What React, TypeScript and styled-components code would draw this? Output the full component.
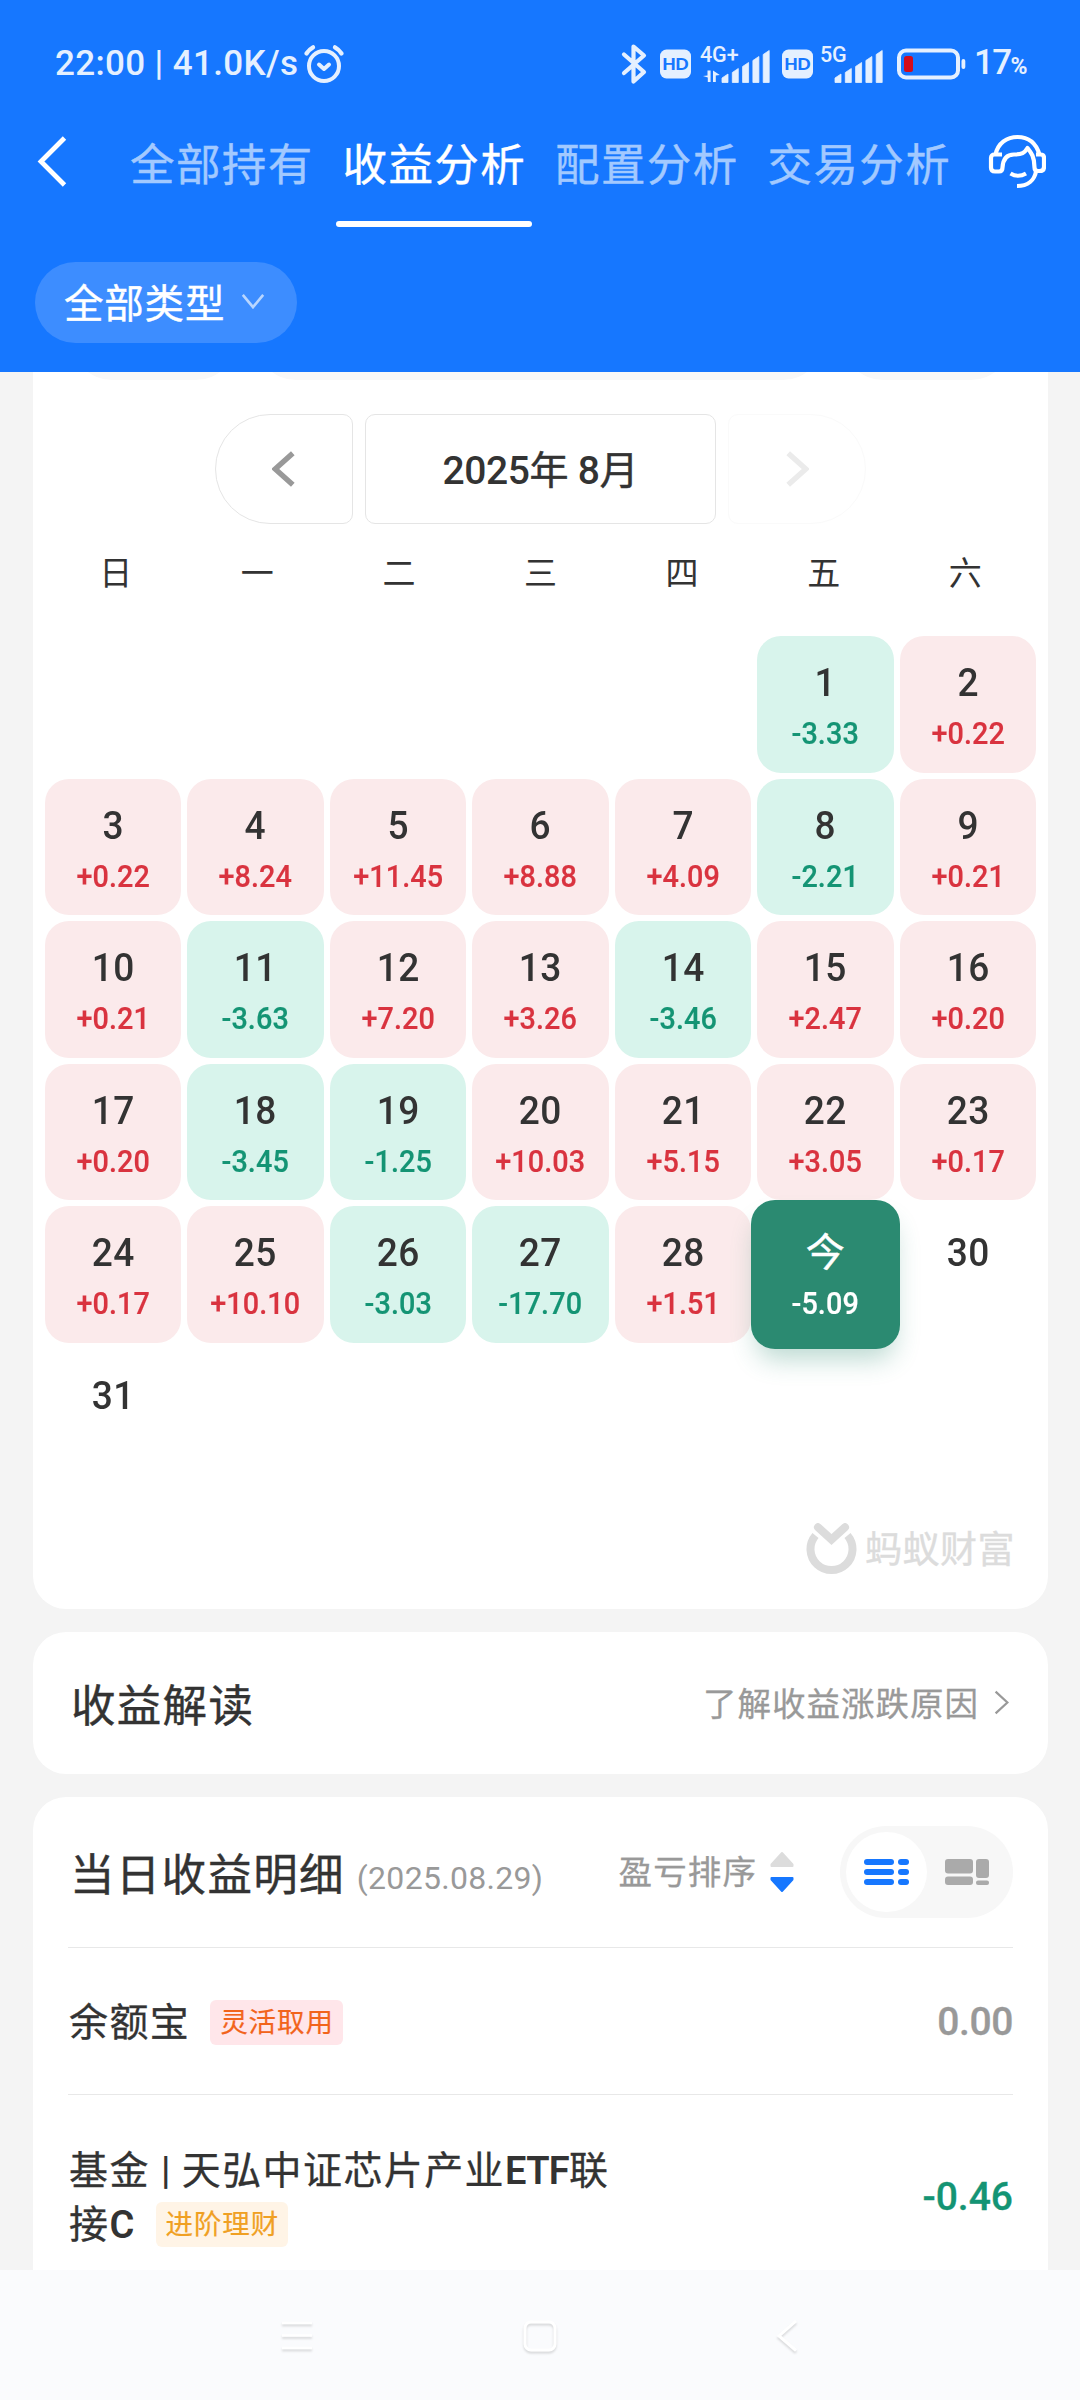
import React from "react";
import styled, { createGlobalStyle, css } from "styled-components";

const CJK = `"Noto Sans CJK SC", sans-serif`;
const NUM = `Roboto, "Noto Sans CJK SC", sans-serif`;

const GlobalStyle = createGlobalStyle`
  * { box-sizing: border-box; }
  body { margin: 0; background: #f4f4f4; }
`;

const Screen = styled.div`
  width: 1080px;
  height: 2400px;
  display: flex;
  flex-direction: column;
  overflow: hidden;
  background: #f4f4f4;
  color: #333;
  font-family: ${CJK};
`;

/* ---------- header ---------- */
const Header = styled.header`
  flex: none;
  height: 372px;
  background: #1677ff;
  color: #fff;
`;

const StatusBar = styled.div`
  height: 127px;
  padding: 0 54px 0 55px;
  display: flex;
  align-items: center;
  justify-content: space-between;
  color: #e5f0ff;
  font: 500 35px/40px ${NUM};
  white-space: pre;
`;

const StatusGroup = styled.div`
  display: flex;
  align-items: center;
`;

const Clock = styled.span`
  letter-spacing: 0.35px;
  margin-right: 5px;
`;

const Glyph = styled.svg<{ $gap?: number }>`
  display: block;
  flex: none;
  margin-left: ${(p) => p.$gap ?? 0}px;
`;

const Percent = styled.span`
  margin-left: 8px;
  padding-top: 2px;
  letter-spacing: -1.6px;
  small {
    font-size: 23px;
    font-weight: 700;
  }
`;

const NavRow = styled.nav`
  height: 100px;
  display: flex;
  padding-left: 36px;
`;

const Tabs = styled.div`
  display: flex;
  gap: 16px;
  margin-left: 55px;
`;

const Tab = styled.div<{ $active?: boolean }>`
  width: 196.5px;
  height: 100px;
  padding-left: 7px;
  font-size: 44.5px;
  line-height: 70px;
  letter-spacing: 1.4px;
  white-space: nowrap;
  -webkit-text-stroke: 0.4px currentColor;
  color: ${(p) => (p.$active ? "#fff" : "#a2c9ff")};
  &::after {
    content: "";
    display: block;
    height: 6px;
    margin: 24px 0 0 -7px;
    border-radius: 3px;
    background: ${(p) => (p.$active ? "#fff" : "transparent")};
  }
`;

const FilterPill = styled.button`
  margin: 35px 0 0 35px;
  width: 262px;
  height: 81px;
  padding: 0 0 3px 29px;
  border: 0;
  border-radius: 41px;
  background: #3d8dff;
  color: #fff;
  font: 400 39.5px/76px ${CJK};
  letter-spacing: 0.8px;
  -webkit-text-stroke: 0.4px currentColor;
  display: flex;
  align-items: center;
  gap: 16px;
`;

/* ---------- scrolling content ---------- */
const Content = styled.main`
  flex: 1;
  min-height: 0;
  overflow: hidden;
  padding: 0 32px 0 33px;
`;

const Card = styled.section`
  background: #fff;
  border-radius: 33px;
`;

const CalendarCard = styled(Card)`
  height: 1237px;
  padding: 0 12px;
  border-radius: 0 0 33px 33px;
`;

const SegmentStrip = styled.div`
  height: 8px;
  display: flex;
  align-items: flex-end;
  gap: 20px;
  padding-left: 27px;
  overflow: hidden;
`;

const SegmentEdge = styled.div<{ $w: number }>`
  flex: none;
  width: ${(p) => p.$w}px;
  height: 80px;
  border-radius: 40px;
  background: #f8f8f8;
`;

const MonthPicker = styled.div`
  margin-top: 34px;
  padding-left: 170px;
  display: flex;
  gap: 12px;
`;

const MonthBox = styled.div<{ $kind: "prev" | "label" | "next" }>`
  height: 110px;
  display: flex;
  align-items: center;
  justify-content: center;
  border: 1px solid #e5e5e5;
  border-radius: 10px;
  width: 351px;
  ${(p) =>
    p.$kind === "prev" &&
    css`
      width: 138px;
      border-radius: 55px 10px 10px 55px;
    `}
  ${(p) =>
    p.$kind === "next" &&
    css`
      width: 138px;
      border-color: #fafafa;
      border-radius: 10px 55px 55px 10px;
    `}
`;

const MonthText = styled.span`
  font: 500 39px/50px ${NUM};
  letter-spacing: -0.4px;
  white-space: pre;
  b {
    font: 400 39px/50px ${CJK};
    letter-spacing: 0;
    -webkit-text-stroke: 0.5px currentColor;
  }
`;

const WeekHeader = styled.div`
  height: 98px;
  display: grid;
  grid-template-columns: repeat(7, 1fr);
  margin-bottom: 14px;
  text-align: center;
  font-size: 33px;
  line-height: 95px;
`;

const DayGrid = styled.div`
  display: grid;
  grid-template-columns: repeat(7, 1fr);
  grid-auto-rows: 136.5px;
  gap: 6px;
`;

type Tone = "up" | "down" | "today" | "none";
const toneBg = { up: "#fbeaeb", down: "#d8f4ec", today: "#2b8a71", none: "transparent" };
const toneFg = { up: "#d9333f", down: "#149474", today: "#fff", none: "#333" };

const DayCell = styled.div<{ $tone: Tone; $col?: number }>`
  ${(p) => p.$col && `grid-column-start: ${p.$col};`}
  padding-top: 22px;
  border-radius: 24px;
  text-align: center;
  background: ${(p) => toneBg[p.$tone]};
  color: ${(p) => toneFg[p.$tone]};
  font-family: ${NUM};
  font-weight: 500;
  ${(p) =>
    p.$tone === "today" &&
    css`
      margin: -6px;
      padding-top: 28px;
      box-shadow: 0 16px 26px -6px rgba(43, 138, 113, 0.32);
    `}
`;

const DayNumber = styled.div<{ $today: boolean }>`
  height: 50px;
  font-size: 39px;
  line-height: 50px;
  letter-spacing: 0.3px;
  transform: scaleX(${(p) => (p.$today ? 1 : 0.95)});
  color: ${(p) => (p.$today ? "#fff" : "#333")};
  font-weight: ${(p) => (p.$today ? 400 : 500)};
  -webkit-text-stroke: ${(p) => (p.$today ? 0.5 : 0)}px currentColor;
`;

const DayValue = styled.div`
  font-size: 32px;
  line-height: 51px;
  letter-spacing: 0.1px;
  transform: scaleX(0.9);
  -webkit-text-stroke: 0.2px currentColor;
`;

const Watermark = styled.div`
  display: flex;
  justify-content: flex-end;
  align-items: center;
  gap: 8px;
  height: 52px;
  margin: 38px 21px 0 0;
  color: #dcdcdc;
  font-size: 37px;
  line-height: 46px;
  letter-spacing: 0.5px;
  -webkit-text-stroke: 0.4px currentColor;
  span {
    padding-bottom: 4px;
  }
`;

const InsightCard = styled(Card)`
  margin-top: 23px;
  height: 142px;
  padding: 0 39px 0 38px;
  display: flex;
  align-items: center;
  justify-content: space-between;
`;

const Title = styled.h2`
  margin: 0;
  font-size: 44.5px;
  font-weight: 400;
  line-height: 60px;
  letter-spacing: 1.3px;
  white-space: nowrap;
  -webkit-text-stroke: 0.4px currentColor;
`;

const InsightTitle = styled(Title)`
  padding-bottom: 1px;
`;

const MoreLink = styled.div`
  display: flex;
  align-items: center;
  gap: 15px;
  color: #999;
  font-size: 33.5px;
  line-height: 44px;
  letter-spacing: 1px;
  padding-bottom: 2px;
  -webkit-text-stroke: 0.3px currentColor;
`;

const DetailCard = styled(Card)`
  margin-top: 23px;
  height: 560px;
  padding: 0 35px;
`;

const DetailHead = styled.div`
  height: 151px;
  padding: 0 0 0 2px;
  display: flex;
  align-items: center;
  border-bottom: 1px solid #e8e8e8;
`;

const DateNote = styled.span`
  margin: 11px 0 0 12px;
  color: #999;
  font: 400 32px/40px ${NUM};
  letter-spacing: 0.3px;
`;

const SortButton = styled.div`
  display: flex;
  align-items: center;
  gap: 13px;
  margin-left: auto;
  color: #999;
  font-size: 33.5px;
  line-height: 44px;
  letter-spacing: 1.1px;
  -webkit-text-stroke: 0.3px currentColor;
`;

const SortLabel = styled.span`
  padding-bottom: 4px;
`;

const ViewSwitch = styled.div`
  width: 173px;
  height: 92px;
  margin-left: 46px;
  padding: 0 24px 0 6px;
  border-radius: 46px;
  background: #f7f7f7;
  display: flex;
  align-items: center;
  justify-content: space-between;
`;

const SwitchKnob = styled.div`
  width: 81px;
  height: 80px;
  border-radius: 40px;
  background: #fff;
  display: grid;
  place-items: center;
`;

const Row = styled.div<{ $h: number; $last?: boolean }>`
  height: ${(p) => p.$h}px;
  padding-left: 1px;
  display: flex;
  align-items: center;
  justify-content: space-between;
  border-bottom: ${(p) => (p.$last ? "0" : "1px solid #e8e8e8")};
`;

const FundName = styled.div`
  width: 560px;
  font-size: 39px;
  line-height: 54px;
  letter-spacing: 1.4px;
  padding-bottom: 5px;
  -webkit-text-stroke: 0.3px currentColor;
`;

const Latin = styled.b<{ $bar?: boolean }>`
  font-family: Roboto, sans-serif;
  font-weight: 600;
  font-size: 38px;
  line-height: 40px;
  letter-spacing: -0.7px;
  -webkit-text-stroke: 0;
  ${(p) => p.$bar && "font-weight: 500; margin: 0 2px 0 1px;"}
`;

const Tag = styled.i<{ $kind: "flex" | "growth" }>`
  display: inline-block;
  height: 45px;
  margin-left: ${(p) => (p.$kind === "flex" ? 20 : 22)}px;
  padding: 0 9px 0 10px;
  border-radius: 6px;
  vertical-align: 4px;
  font: 400 27.5px/41px ${CJK};
  letter-spacing: 0.9px;
  -webkit-text-stroke: 0.2px currentColor;
  color: ${(p) => (p.$kind === "flex" ? "#f2641c" : "#f0a023")};
  background: ${(p) => (p.$kind === "flex" ? "#ffe6ea" : "#fff4e6")};
`;

const Amount = styled.div<{ $down?: boolean }>`
  font: 500 39px/46px ${NUM};
  letter-spacing: ${(p) => (p.$down ? 0 : -0.4)}px;
  padding-top: ${(p) => (p.$down ? 0 : 2)}px;
  -webkit-text-stroke: 0.3px currentColor;
  color: ${(p) => (p.$down ? "#149474" : "#999")};
`;

/* ---------- system navigation ---------- */
const SystemNav = styled.footer`
  flex: none;
  height: 130px;
  background: #fafbfd;
  display: flex;
  align-items: center;
  justify-content: space-between;
  padding: 2px 276px 0 276px;
`;

const SoftGlyph = styled.svg`
  display: block;
  filter: drop-shadow(0 2px 1px rgba(0, 0, 0, 0.14));
`;

const days: [number, string][] = [
  [1, "-3.33"], [2, "+0.22"], [3, "+0.22"], [4, "+8.24"], [5, "+11.45"], [6, "+8.88"], [7, "+4.09"],
  [8, "-2.21"], [9, "+0.21"], [10, "+0.21"], [11, "-3.63"], [12, "+7.20"], [13, "+3.26"], [14, "-3.46"],
  [15, "+2.47"], [16, "+0.20"], [17, "+0.20"], [18, "-3.45"], [19, "-1.25"], [20, "+10.03"], [21, "+5.15"],
  [22, "+3.05"], [23, "+0.17"], [24, "+0.17"], [25, "+10.10"], [26, "-3.03"], [27, "-17.70"], [28, "+1.51"],
  [29, "-5.09"], [30, ""], [31, ""],
];
const TODAY = 29;

const toneOf = (day: number, value: string): Tone =>
  day === TODAY ? "today" : !value ? "none" : value[0] === "+" ? "up" : "down";

const AlarmIcon = () => (
  <Glyph width="42" height="42" viewBox="0 0 42 42" fill="none" stroke="currentColor" strokeLinecap="round" strokeLinejoin="round">
    <circle cx="21" cy="23" r="15" strokeWidth="4" />
    <path d="M16 21.500l5 4.500 5-4.500" strokeWidth="4" />
    <path d="M3.500 10.500Q6 6.500 10 4.300M38.500 10.500Q36 6.500 32 4.300" strokeWidth="4.300" />
  </Glyph>
);

const BluetoothIcon = () => (
  <Glyph width="26" height="42" viewBox="0 0 26 42" fill="none" stroke="currentColor" strokeWidth="4.200" strokeLinecap="round" strokeLinejoin="round">
    <path d="M3 11.500l20 17.500-10.500 9.500v-35L23 12.500 3 30" />
  </Glyph>
);

const HdBadge = ({ gap }: { gap: number }) => (
  <Glyph $gap={gap} width="31" height="30" viewBox="0 0 31 30">
    <rect x="0" y="0.5" width="31" height="29" rx="6.5" fill="currentColor" />
    <text x="15.2" y="21.4" textAnchor="middle" fontFamily="Lato, sans-serif" fontWeight="900" fontSize="17.5" letterSpacing="-0.5" fill="#1677ff">
      HD
    </text>
  </Glyph>
);

const SignalIcon = ({ label, gap, data }: { label: string; gap: number; data?: boolean }) => {
  const x0 = data ? 22 : 15;
  return (
    <Glyph $gap={gap} width={x0 + 49} height="40" viewBox={`0 0 ${x0 + 49} 40`} fill="currentColor">
      <text x="0" y="17.500" fontFamily="Roboto, sans-serif" fontWeight="500" fontSize="21.5" letterSpacing="-0.1">
        {label}
      </text>
      {data && <path d="M10.600 26.500v11.500h-2.800v-4.500l-4.800-1.500 4.500-0.500v-5zM13 38v-11.500l6.800 4.500-4 0.500v6.500z" />}
      {[7.5, 13, 19, 25, 31].map((h, i) => (
        <path key={h} d={`M${x0 + i * 10.3} 38.500v-${h - 3}l6-4v${h + 1}z`} stroke="currentColor" strokeWidth="0.8" strokeLinejoin="round" />
      ))}
    </Glyph>
  );
};

const BatteryIcon = () => (
  <Glyph $gap={13} width="69" height="32" viewBox="0 0 69 32">
    <rect x="2" y="2.500" width="59" height="27" rx="7" fill="none" stroke="currentColor" strokeWidth="4" />
    <rect x="7" y="8" width="9" height="16" rx="2.500" fill="#d40c1c" />
    <rect x="64.500" y="11" width="3.800" height="10" rx="1.900" fill="currentColor" />
  </Glyph>
);

const BackIcon = () => (
  <Glyph width="32" height="52" viewBox="0 0 32 52" style={{ marginTop: 8 }} fill="none" stroke="#fff" strokeWidth="4.800">
    <path d="M28.500 3L5 26.500 28.500 50" />
  </Glyph>
);

const HeadsetIcon = () => (
  <Glyph $gap={29} width="60" height="60" viewBox="0 0 60 60" style={{ marginTop: 5 }} fill="none" stroke="#fff" strokeWidth="4.200" strokeLinejoin="round">
    <path d="M9.500 22.500C12 11 21 5 31.500 5S50 11 53.500 22.500" />
    <path d="M16 22.500H8.500Q5 22.500 5 26v9.500q0 4 4 4h4q3.500 0 3.500-4C17 27 21 22.500 28 22.500c8 0 10.500-1.500 13.500-6.500 4 5 7 9 7 19.500q0 3.500 3.500 3.500h1.500q4.500 0 4.500-4V26q0-3.500-3.500-3.500H50" />
    <path d="M50 39.500C48.500 48 42 54 31 54" />
    <path d="M24.500 41.500q7.500 4.500 15.500 0" />
  </Glyph>
);

const Chevron = ({ w, h, stroke, color, dir }: { w: number; h: number; stroke: number; color: string; dir: "left" | "right" | "down" }) => {
  const s = stroke / 2 + 0.5;
  const d =
    dir === "down"
      ? `M${s} ${s}L${w / 2} ${h - s}L${w - s} ${s}`
      : dir === "left"
        ? `M${w - s} ${s}L${s} ${h / 2}L${w - s} ${h - s}`
        : `M${s} ${s}L${w - s} ${h / 2}L${s} ${h - s}`;
  return (
    <Glyph width={w} height={h} viewBox={`0 0 ${w} ${h}`} fill="none" stroke={color} strokeWidth={stroke}>
      <path d={d} />
    </Glyph>
  );
};

const AntFortuneLogo = () => (
  <Glyph width="51" height="53" viewBox="0 0 51 53" fill="none" stroke="#dcdcdc">
    <path d="M9.500 12.500A21 21 0 1 0 41.500 12.500" strokeWidth="8" />
    <path d="M12 4.200L25.500 16.500 39 4.200" strokeWidth="8" strokeLinecap="round" />
  </Glyph>
);

const SortIcon = () => (
  <Glyph width="24" height="42" viewBox="0 0 24 42" strokeLinejoin="round" strokeWidth="2">
    <path d="M12 2L22.500 13.500V15h-21v-1.500z" fill="#dcdcdc" stroke="#dcdcdc" />
    <path d="M12 40L22.500 28.500V27h-21v1.500z" fill="#1677ff" stroke="#1677ff" />
  </Glyph>
);

const ListViewIcon = () => (
  <Glyph width="45" height="26" viewBox="0 0 45 26" fill="#1677ff">
    {[0, 10, 20].map((y) => (
      <React.Fragment key={y}>
        <rect x="0" y={y} width="30" height="6" rx="3" />
        <rect x="34" y={y} width="11" height="6" rx="3" />
      </React.Fragment>
    ))}
  </Glyph>
);

const BlockViewIcon = () => (
  <Glyph width="44" height="26" viewBox="0 0 44 26" fill="#aaa">
    <rect x="0" y="0" width="28" height="14.500" rx="3" />
    <rect x="0" y="17.500" width="28" height="8.500" rx="3" />
    <rect x="31" y="0" width="13" height="19" rx="3" />
    <rect x="31" y="21.500" width="13" height="4.500" rx="2" />
  </Glyph>
);

export default function App() {
  return (
    <Screen>
      <GlobalStyle />
      <Header>
        <StatusBar>
          <StatusGroup>
            <Clock>22:00 | 41.0K/s</Clock>
            <AlarmIcon />
          </StatusGroup>
          <StatusGroup>
            <BluetoothIcon />
            <HdBadge gap={13} />
            <SignalIcon label="4G+" gap={9} data />
            <HdBadge gap={11} />
            <SignalIcon label="5G" gap={7} />
            <BatteryIcon />
            <Percent>
              17<small>%</small>
            </Percent>
          </StatusGroup>
        </StatusBar>
        <NavRow>
          <BackIcon />
          <Tabs>
            <Tab>全部持有</Tab>
            <Tab $active>收益分析</Tab>
            <Tab>配置分析</Tab>
            <Tab>交易分析</Tab>
          </Tabs>
          <HeadsetIcon />
        </NavRow>
        <FilterPill>
          全部类型
          <Chevron w={24} h={16} stroke={2.6} color="#b9d6ff" dir="down" />
        </FilterPill>
      </Header>

      <Content>
        <CalendarCard>
          <SegmentStrip>
            <SegmentEdge $w={164} />
            <SegmentEdge $w={567} />
            <SegmentEdge $w={168} />
          </SegmentStrip>
          <MonthPicker>
            <MonthBox $kind="prev">
              <Chevron w={24} h={38} stroke={5.4} color="#999" dir="left" />
            </MonthBox>
            <MonthBox $kind="label">
              <MonthText>
                2025<b>年</b> 8<b>月</b>
              </MonthText>
            </MonthBox>
            <MonthBox $kind="next">
              <Chevron w={24} h={38} stroke={5.4} color="#ebebeb" dir="right" />
            </MonthBox>
          </MonthPicker>
          <WeekHeader>
            {["日", "一", "二", "三", "四", "五", "六"].map((d) => (
              <span key={d}>{d}</span>
            ))}
          </WeekHeader>
          <DayGrid>
            {days.map(([day, value]) => (
              <DayCell key={day} $tone={toneOf(day, value)} $col={day === 1 ? 6 : undefined}>
                <DayNumber $today={day === TODAY}>{day === TODAY ? "今" : day}</DayNumber>
                {value && <DayValue>{value}</DayValue>}
              </DayCell>
            ))}
          </DayGrid>
          <Watermark>
            <AntFortuneLogo />
            <span>蚂蚁财富</span>
          </Watermark>
        </CalendarCard>

        <InsightCard>
          <InsightTitle>收益解读</InsightTitle>
          <MoreLink>
            了解收益涨跌原因
            <Chevron w={15} h={25} stroke={2.2} color="#999" dir="right" />
          </MoreLink>
        </InsightCard>

        <DetailCard>
          <DetailHead>
            <Title>当日收益明细</Title>
            <DateNote>(2025.08.29)</DateNote>
            <SortButton>
              <SortLabel>盈亏排序</SortLabel>
              <SortIcon />
            </SortButton>
            <ViewSwitch>
              <SwitchKnob>
                <ListViewIcon />
              </SwitchKnob>
              <BlockViewIcon />
            </ViewSwitch>
          </DetailHead>
          <Row $h={147}>
            <FundName>
              余额宝<Tag $kind="flex">灵活取用</Tag>
            </FundName>
            <Amount>0.00</Amount>
          </Row>
          <Row $h={203} $last>
            <FundName>
              基金 <Latin $bar>|</Latin> 天弘中证芯片产业<Latin>ETF</Latin>联
              <br />
              接<Latin>C</Latin>
              <Tag $kind="growth">进阶理财</Tag>
            </FundName>
            <Amount $down>-0.46</Amount>
          </Row>
        </DetailCard>
      </Content>

      <SystemNav>
        <SoftGlyph width="42" height="36" viewBox="0 0 42 36" stroke="#fff" strokeWidth="2.500" fill="none">
          <path d="M6 5h30M6 17.500h30M6 30h30" />
        </SoftGlyph>
        <SoftGlyph width="36" height="36" viewBox="0 0 36 36" stroke="#fff" strokeWidth="3" fill="none">
          <rect x="3" y="4" width="30" height="28" rx="6" />
        </SoftGlyph>
        <SoftGlyph width="42" height="36" viewBox="-12 0 42 36" stroke="#fff" strokeWidth="3" fill="none">
          <path d="M22 3L5 18l17 14.500" />
        </SoftGlyph>
      </SystemNav>
    </Screen>
  );
}
